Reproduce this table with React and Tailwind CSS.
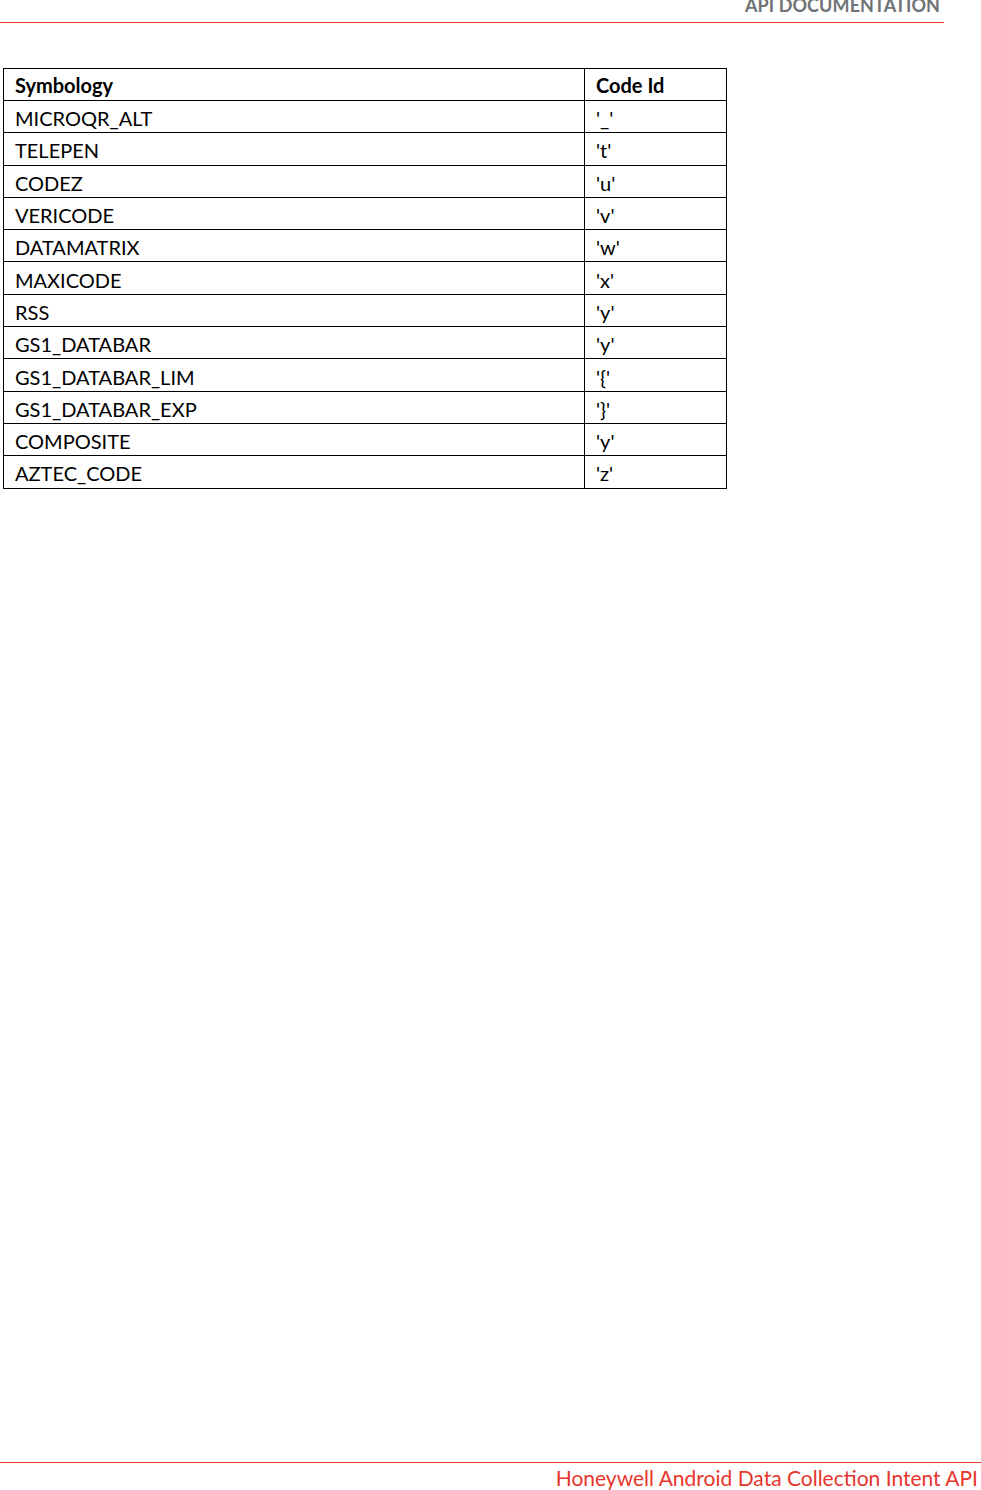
const ROWS = [
    ['MICROQR_ALT', "'_'"],
    ['TELEPEN', "'t'"],
    ['CODEZ', "'u'"],
    ['VERICODE', "'v'"],
    ['DATAMATRIX', "'w'"],
    ['MAXICODE', "'x'"],
    ['RSS', "'y'"],
    ['GS1_DATABAR', "'y'"],
    ['GS1_DATABAR_LIM', "'{'"],
    ['GS1_DATABAR_EXP', "'}'"],
    ['COMPOSITE', "'y'"],
    ['AZTEC_CODE', "'z'"],
];

export default function App() {
    return (
        <div className="h-[1490px] w-[981px] bg-white flex flex-col overflow-hidden" style={{ fontFamily: 'Lato, "Open Sans", sans-serif' }}>
            {/* Running header */}
            <div className="w-[944px] h-[23px] border-b-[1.5px] border-[#e8352c] flex justify-end items-end pr-[4px]">
                <span className="text-[18px] font-bold leading-none text-[#6f7275] tracking-[0.1px] mb-[8px]">API DOCUMENTATION</span>
            </div>

            {/* Code id table */}
            <table className="ml-[3px] mt-[45px] w-[724px] border-collapse text-[20px] text-black">
                <thead>
                    <tr className="h-[32px]">
                        <th className="border border-black text-left font-bold px-[11px] pt-[1px] leading-none w-[581px]">Symbology</th>
                        <th className="border border-black text-left font-bold px-[11px] pt-[1px] leading-none">Code Id</th>
                    </tr>
                </thead>
                <tbody>
                    {ROWS.map(([name, id]) => (
                        <tr key={name} className="h-[32.3px]">
                            <td className="border border-black px-[11px] pt-[3px] leading-none">{name}</td>
                            <td className="border border-black px-[11px] pt-[3px] leading-none">{id}</td>
                        </tr>
                    ))}
                </tbody>
            </table>

            <div className="flex-1" />

            {/* Running footer */}
            <div className="border-t border-[#e8352c] h-[28px] flex justify-end items-start pr-[3px] pt-[4px]">
                <span className="text-[21px] leading-none text-[#e8352c]">Honeywell Android Data Collection Intent API</span>
            </div>
        </div>
    );
}
